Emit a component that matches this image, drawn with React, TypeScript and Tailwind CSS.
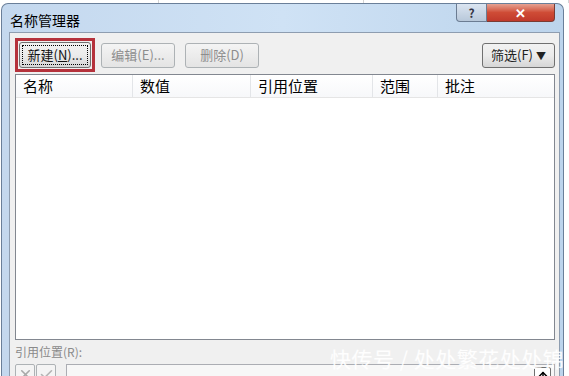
import { ArrowUp, X, Check } from 'lucide-react';

const font = { fontFamily: '"Noto Sans CJK SC", "Microsoft YaHei", sans-serif' };

function Btn({ label, disabled, className = '' }: { label: React.ReactNode; disabled?: boolean; className?: string }) {
  return (
    <div
      className={`h-[25px] rounded-[3px] border flex items-center justify-center text-[13px] ${
        disabled
          ? 'border-[#adb2b5] bg-gradient-to-b from-[#f4f4f4] to-[#e4e4e4] text-[#8d8d8d]'
          : 'border-[#707070] bg-gradient-to-b from-[#f2f2f2] via-[#ebebeb] to-[#d6d6d6] text-[#111]'
      } ${className}`}
    >
      {label}
    </div>
  );
}

export default function App() {
  const cols = [
    { name: '名称', w: 'w-[117px]' },
    { name: '数值', w: 'w-[118px]' },
    { name: '引用位置', w: 'w-[122px]' },
    { name: '范围', w: 'w-[65px]' },
    { name: '批注', w: 'flex-1' },
  ];

  return (
    <div className="w-[569px] h-[376px] overflow-hidden bg-white relative" style={font}>
      {/* spreadsheet strip behind the window */}
      <div className="h-[3px] flex">
        <div className="w-[170px] border-r border-[#d4d4d4]" />
        <div className="w-[220px] border-r border-[#d4d4d4]" />
        <div className="w-[220px] border-r border-[#d4d4d4]" />
      </div>

      {/* window frame */}
      <div className="h-[373px] ml-[1px] mr-[5px] rounded-tl-[7px] rounded-tr-[7px] border border-b-0 border-[#6a7f99] bg-gradient-to-r from-[#c4d8ee] via-[#cfe2f5] to-[#bcd4ec] flex flex-col overflow-hidden">
        {/* title bar */}
        <div className="h-[28px] shrink-0 flex items-start">
          <div className="pl-[8px] pt-[9px] text-[14px] text-black leading-none">名称管理器</div>
          <div className="ml-auto mr-[8px] flex">
            <div className="w-[31px] h-[18px] rounded-bl-[4px] border border-t-0 border-[#6b7c92] bg-gradient-to-b from-[#dbe5f1] to-[#b8c8da] flex items-center justify-center text-[12px] text-[#334] font-bold leading-none">
              ?
            </div>
            <div className="w-[68px] h-[18px] rounded-br-[4px] border border-l-0 border-t-0 border-[#7a3b33] bg-gradient-to-b from-[#e5a192] via-[#cf4c36] to-[#c0392b] flex items-center justify-center text-white font-bold text-[13px] leading-none">
              ✕
            </div>
          </div>
        </div>

        {/* client area */}
        <div className="flex-1 min-h-0 overflow-hidden ml-[7px] mr-[3px] border border-b-0 border-[#8e9db0] bg-[#f0f0f0] flex flex-col pl-[5px] pr-[4px]">
          {/* button row */}
          <div className="shrink-0 flex items-center mt-[4px] h-[36px]">
            <div className="border-[3px] border-[#b5323c] p-[1px]">
              <Btn
                className="w-[72px] h-[26px] border-[#3c7fb1] from-[#eaf6fd] via-[#d9f0fc] to-[#bee6fd] outline-1 outline-dotted outline-black -outline-offset-4"
                label={<span>新建(<span className="underline">N</span>)...</span>}
              />
            </div>
            <Btn disabled className="w-[74px] ml-[6px]" label="编辑(E)..." />
            <Btn disabled className="w-[74px] ml-[10px]" label="删除(D)" />
            <Btn className="w-[73px] ml-auto border-[#8a8a8a] text-[#222]" label={<span>筛选(F) <span className="text-[10px]">▼</span></span>} />
          </div>

          {/* list */}
          <div className="shrink-0 mt-[1px] h-[266px] border border-[#828790] bg-white flex flex-col">
            <div className="h-[23px] flex border-b border-[#e5e5e5] bg-gradient-to-b from-white to-[#f7f8fa]">
              {cols.map((c, i) => (
                <div
                  key={c.name}
                  className={`${c.w} ${i < cols.length - 1 ? 'border-r border-[#e3e5e8]' : ''} flex items-center pl-[7px] text-[15px] text-black`}
                >
                  {c.name}
                </div>
              ))}
            </div>
          </div>

          {/* reference */}
          <div className="shrink-0 mt-[6px] text-[12px] text-[#8a8a8a] leading-none">引用位置(R):</div>
          <div className="shrink-0 mt-[6px] flex items-start">
            <div className="w-[20px] h-[20px] border border-[#adb2b5] rounded-[2px] bg-[#f4f4f4] flex items-start justify-center pt-[2px]">
              <X size={15} strokeWidth={2.5} className="text-[#a8a8a8]" />
            </div>
            <div className="w-[20px] h-[20px] ml-[1px] border border-[#adb2b5] rounded-[2px] bg-[#f4f4f4] flex items-start justify-center pt-[2px]">
              <Check size={15} strokeWidth={2.5} className="text-[#b4b4b4]" />
            </div>
            <div className="ml-[10px] flex-1 h-[22px] border border-[#abadb3] bg-[#f7f7f7] flex justify-end pr-[3px] pt-[2px]">
              <div className="w-[17px] h-[17px] border border-[#707070] bg-white rounded-[2px] flex items-center justify-center">
                <ArrowUp size={12} strokeWidth={3} className="text-black" />
              </div>
            </div>
          </div>
        </div>
      </div>

      {/* watermark */}
      <div className="absolute left-[330px] top-[343px] text-[21px] text-white/90 tracking-[0.5px] whitespace-nowrap">
        快传号 / 处处繁花处处锦
      </div>
    </div>
  );
}
